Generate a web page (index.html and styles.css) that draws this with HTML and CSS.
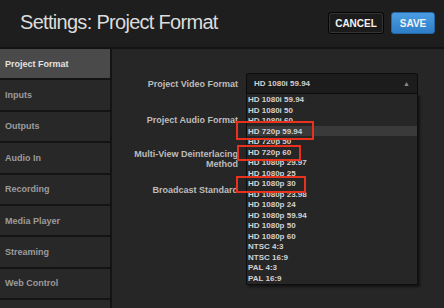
FILE: index.html
```html
<!DOCTYPE html>
<html lang="en">
<head>
    <meta charset="UTF-8">
    <link rel="stylesheet" href="styles.css">
</head>
<body>
    <div class="header">
        <div class="title">Settings: Project Format</div>
        <div class="actions">
            <button class="btn cancel-btn">CANCEL</button>
            <button class="btn save-btn">SAVE</button>
        </div>
    </div>

    <div class="main">
        <div class="sidebar">
            <div class="nav-item active">Project Format</div>
            <div class="nav-item">Inputs</div>
            <div class="nav-item">Outputs</div>
            <div class="nav-item">Audio In</div>
            <div class="nav-item">Recording</div>
            <div class="nav-item">Media Player</div>
            <div class="nav-item">Streaming</div>
            <div class="nav-item">Web Control</div>
            <div class="nav-item"></div>
        </div>

        <div class="content">
            <div class="form">
                <div class="label">Project Video Format</div>
                <div class="select-wrap">
                    <div class="select">
                        <span>HD 1080i 59.94</span>
                        <span class="arrow">&#9650;</span>
                    </div>
                    <div class="dropdown">
                        <div class="option">HD 1080i 59.94</div>
                        <div class="option">HD 1080i 50</div>
                        <div class="option">HD 1080i 60</div>
                        <div class="option hover">HD 720p 59.94</div>
                        <div class="option">HD 720p 50</div>
                        <div class="option">HD 720p 60</div>
                        <div class="option">HD 1080p 29.97</div>
                        <div class="option">HD 1080p 25</div>
                        <div class="option">HD 1080p 30</div>
                        <div class="option">HD 1080p 23.98</div>
                        <div class="option">HD 1080p 24</div>
                        <div class="option">HD 1080p 59.94</div>
                        <div class="option">HD 1080p 50</div>
                        <div class="option">HD 1080p 60</div>
                        <div class="option">NTSC 4:3</div>
                        <div class="option">NTSC 16:9</div>
                        <div class="option">PAL 4:3</div>
                        <div class="option">PAL 16:9</div>
                    </div>
                </div>

                <div class="label">Project Audio Format</div>
                <div></div>

                <div class="label">Multi-View Deinterlacing<br>Method</div>
                <div></div>

                <div class="label">Broadcast Standard</div>
                <div></div>
            </div>

            <!-- red highlight marks -->
            <div class="mark mark-1"></div>
            <div class="mark mark-2"></div>
            <div class="mark mark-3"></div>
        </div>
    </div>
</body>
</html>
```

FILE: styles.css
```css
* {
    margin: 0;
    padding: 0;
    box-sizing: border-box;
}

body {
    width: 444px;
    height: 308px;
    overflow: hidden;
    font-family: "Liberation Sans", Arial, sans-serif;
    background: #262626;
}

.header {
    display: flex;
    justify-content: space-between;
    align-items: center;
    height: 49px;
    padding: 0 9px 3px 20px;
    background: #1e1e1e;
    border-bottom: 2px solid #131313;
}

.title {
    font-size: 20px;
    letter-spacing: -0.7px;
    color: #dcdcdc;
}

.actions {
    display: flex;
    gap: 7px;
    padding-top: 2px;
}

.btn {
    height: 22px;
    font-family: "Liberation Sans", Arial, sans-serif;
    font-size: 10px;
    font-weight: bold;
    color: #f2f2f2;
    border-radius: 3px;
}

.cancel-btn {
    width: 56px;
    background: #1b1b1b;
    border: 1px solid #050505;
    box-shadow: inset 0 0 0 1px #343434;
}

.save-btn {
    width: 44px;
    background: linear-gradient(#4b9de2, #2e7dc8);
    border: 1px solid #2466a6;
}

.main {
    display: flex;
    height: 259px;
    overflow: hidden;
}

.sidebar {
    width: 112px;
    flex-shrink: 0;
    overflow: hidden;
    background: #282828;
    border-right: 2px solid #141414;
}

.nav-item {
    height: 31.4px;
    padding-left: 5px;
    display: flex;
    align-items: center;
    font-size: 9px;
    font-weight: bold;
    color: #9c9c9c;
    border-bottom: 2px solid #141414;
}

.nav-item.active {
    background: #4a4a4a;
    color: #e2e2e2;
}

.content {
    flex: 1;
    position: relative;
}

.form {
    display: grid;
    grid-template-columns: 126px 172px;
    grid-template-rows: 36px 36px 42px 21px;
    column-gap: 8px;
    align-items: center;
    padding-top: 16.5px;
}

.label {
    text-align: right;
    font-size: 9px;
    font-weight: bold;
    line-height: 10px;
    color: #bdbdbd;
}

.select-wrap {
    position: relative;
    z-index: 2;
}

.select {
    display: flex;
    justify-content: space-between;
    align-items: center;
    height: 21px;
    padding: 0 7px 0 7px;
    background: #1c1c1c;
    border: 1px solid #0c0c0c;
    border-radius: 2px 2px 0 0;
    font-size: 8px;
    font-weight: bold;
    color: #cfcfcf;
}

.arrow {
    font-size: 7px;
    color: #8a8a8a;
}

.dropdown {
    position: absolute;
    top: 100%;
    left: 0;
    width: 172px;
    padding-bottom: 1px;
    background: #262626;
    border: 1px solid #0e0e0e;
    border-top: none;
    box-shadow: 2px 2px 2px rgba(0,0,0,0.5);
}

.option {
    height: 10.5px;
    line-height: 11px;
    padding-left: 1px;
    font-size: 8px;
    font-weight: bold;
    color: #d2d2d2;
    white-space: nowrap;
}

.option.hover {
    background: #3a3a3a;
}

.mark {
    position: absolute;
    z-index: 3;
    border: 2px solid #e8321e;
}

.mark-1 {
    left: 124px;
    top: 72px;
    width: 78px;
    height: 19px;
}

.mark-2 {
    left: 125px;
    top: 96px;
    width: 64px;
    height: 16px;
}

.mark-3 {
    left: 124px;
    top: 127px;
    width: 70px;
    height: 17px;
}
```
